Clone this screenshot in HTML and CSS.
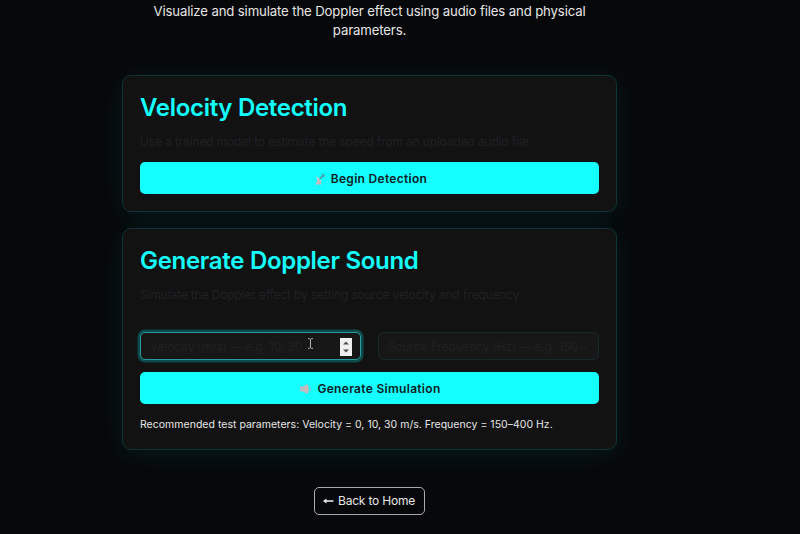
FILE: index.html
```html
<!DOCTYPE html>
<html lang="en">
<head>
<meta charset="utf-8">
<title>Doppler Effect</title>
<link rel="stylesheet" href="styles.css">
</head>
<body>
<main class="page">
  <p class="lead">Visualize and simulate the Doppler effect using audio files and physical<br>parameters.</p>

  <section class="card">
    <h2 class="title">Velocity Detection</h2>
    <p class="desc">Use a trained model to estimate the speed from an uploaded audio file.</p>
    <button class="btn">
      <svg class="icon" viewBox="0 0 12 12"><path d="M2.500 3 8 8.500Q5 9.500 3.300 7.500 2 5.500 2.500 3Z" fill="#c5d2d4"/><path d="M4 6.500 1.500 11.500H7.500L6.500 7.500Z" fill="#c4b9bd"/><path d="M5.500 6 9 3M8 1 10.500 3.500" fill="none" stroke="#4f8a92" stroke-width="1.300"/><circle cx="3" cy="10.600" r="1.100" fill="#d8b0b0"/></svg>
      <span>Begin Detection</span>
    </button>
  </section>

  <section class="card">
    <h2 class="title">Generate Doppler Sound</h2>
    <p class="desc">Simulate the Doppler effect by setting source velocity and frequency.</p>
    <div class="fields">
      <div class="field focused">
        <span class="hint">Velocity (m/s) — e.g. 10, 30</span>
        <span class="spin"><svg viewBox="0 0 12 18"><path d="M3 6.500 6 3.500 9 6.500ZM3 11.500H9L6 14.500Z" fill="#505050"/></svg></span>
        <svg class="cursor" viewBox="0 0 7 11"><path d="M1 .7H2.500L3.500 1.300 4.500 .7H6M3.500 1.300V9.700M1 10.300H2.500L3.500 9.700 4.500 10.300H6" fill="none" stroke="#b4b4b4"/></svg>
      </div>
      <div class="field"><span class="hint">Source Frequency (Hz) — e.g. 150 –</span></div>
    </div>
    <button class="btn">
      <svg class="icon" viewBox="0 0 12 12"><path d="M0 3.500H3L6.500 1.500V10.500L3 8.500H0Z" fill="#b9bec2"/><ellipse cx="6.700" cy="6" rx="2" ry="4.500" fill="#c9b9bb"/><path d="M10 3.500Q11.500 6 10 8.500" fill="none" stroke="#7cc3cc"/></svg>
      <span>Generate Simulation</span>
    </button>
    <p class="note">Recommended test parameters: Velocity = 0, 10, 30 m/s. Frequency = 150–400 Hz.</p>
  </section>

  <a class="back"><svg class="arrow" viewBox="0 0 11 8"><path d="M0 4 3.500 1.500V3.200H10.500V4.800H3.500V6.500Z" fill="#eee"/></svg><span>Back to Home</span></a>
</main>
</body>
</html>
```
FILE: styles.css
```css
* { box-sizing: border-box; }
body {
  margin: 0;
  height: 534px;
  overflow: hidden;
  background: #07080a;
  color: #e6e6e6;
  font-family: Inter, "Liberation Sans", sans-serif;
}
.page {
  width: 495px;
  margin-left: 122px;
  display: flex;
  flex-direction: column;
}
.lead {
  margin: 2px 0 35px;
  font-size: 13.2px;
  line-height: 19px;
  letter-spacing: -.14px;
  text-align: center;
}
.card {
  height: 137px;
  margin-bottom: 16px;
  padding: 17px;
  border: 1px solid #0d3335;
  border-radius: 9px;
  background: #121212;
  box-shadow: 0 4px 28px rgba(0, 255, 255, .08);
}
.card + .card { height: 222px; margin-bottom: 37px; }
.title {
  margin: 0;
  height: 28px;
  font-size: 24px;
  line-height: 28px;
  font-weight: 600;
  letter-spacing: -.3px;
  color: #14ffff;
}
.desc {
  margin: 13px 0 12px;
  font-size: 12px;
  line-height: 16px;
  letter-spacing: -.14px;
  color: #202125;
}
.btn {
  width: 100%;
  height: 32px;
  display: flex;
  align-items: center;
  justify-content: center;
  gap: 5px;
  padding: 1px 0 0 2px;
  border: 0;
  border-radius: 5px;
  background: #14ffff;
  color: #0b2022;
  font: 600 12px/16px Inter, sans-serif;
  letter-spacing: .3px;
}
.icon { width: 12px; height: 12px; }
.fields {
  display: grid;
  grid-template-columns: 1fr 1fr;
  gap: 17px;
  margin: 29px 0 12px;
}
.field {
  position: relative;
  height: 28px;
  display: flex;
  align-items: center;
  justify-content: space-between;
  padding: 0 8px 0 9px;
  border: 1px solid #14292b;
  border-radius: 5px;
  background: #171717;
  overflow: hidden;
  white-space: nowrap;
}
.focused {
  border-color: #289b9d;
  box-shadow: 0 0 0 2.500px #0c4a4c;
}
.hint { font-size: 12px; letter-spacing: -.14px; color: #202123; }
.spin { width: 12px; height: 18px; margin-top: 1px; background: #efefef; }
.spin svg { display: block; width: 12px; height: 18px; }
.cursor { position: absolute; left: 166px; top: 5px; width: 7px; height: 11px; }
.title { padding-top: .5px; }
.note {
  margin: 14px 0 0;
  font-size: 10.5px;
  line-height: 14px;
  letter-spacing: .02px;
}
.back {
  align-self: center;
  height: 28px;
  display: flex;
  align-items: center;
  gap: 4px;
  padding: 0 9px 1px 8px;
  border: 1px solid #aaa;
  border-radius: 5px;
  font-size: 12px;
  letter-spacing: -.2px;
}
.arrow { width: 11px; height: 8px; }
```
